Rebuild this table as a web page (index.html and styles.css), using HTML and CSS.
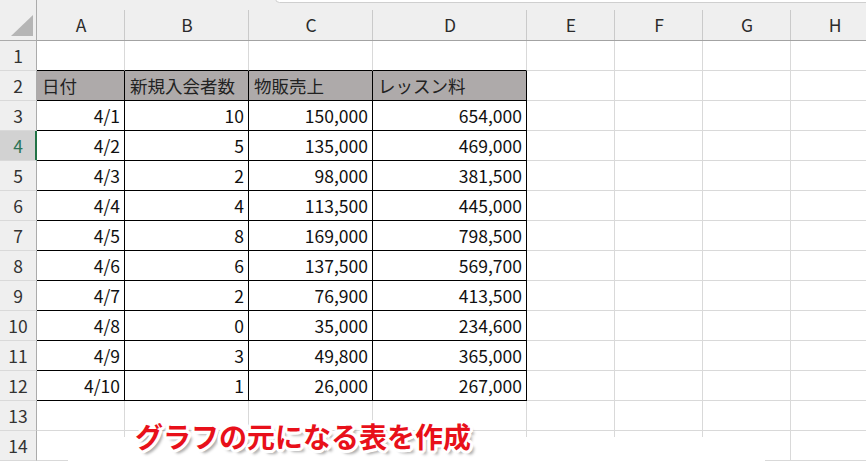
FILE: index.html
```html
<!DOCTYPE html>
<html lang="ja">
<head>
<meta charset="utf-8">
<link rel="stylesheet" href="styles.css">
</head>
<body>
<div class="screen">
  <div class="fbar"></div>
  <div class="sheet">
    <div class="corner"><svg width="37" height="40" viewBox="0 0 37 40"><polygon points="11,36 33,36 33,15" fill="#b5b5b5"/></svg></div>
    <div class="ch">A</div><div class="ch">B</div><div class="ch">C</div><div class="ch">D</div><div class="ch">E</div><div class="ch">F</div><div class="ch">G</div><div class="ch">H</div>

    <div class="rh">1</div><div class="c tt"></div><div class="c tt"></div><div class="c tt"></div><div class="c tt"></div><div class="c"></div><div class="c"></div><div class="c"></div><div class="c"></div>

    <div class="rh">2</div><div class="c t hd">日付</div><div class="c t hd">新規入会者数</div><div class="c t hd">物販売上</div><div class="c t hd">レッスン料</div><div class="c"></div><div class="c"></div><div class="c"></div><div class="c"></div>

    <div class="rh">3</div><div class="c t n">4/1</div><div class="c t n">10</div><div class="c t n">150,000</div><div class="c t n">654,000</div><div class="c"></div><div class="c"></div><div class="c"></div><div class="c"></div>

    <div class="rh sel">4</div><div class="c t n">4/2</div><div class="c t n">5</div><div class="c t n">135,000</div><div class="c t n">469,000</div><div class="c"></div><div class="c"></div><div class="c"></div><div class="c"></div>

    <div class="rh">5</div><div class="c t n">4/3</div><div class="c t n">2</div><div class="c t n">98,000</div><div class="c t n">381,500</div><div class="c"></div><div class="c"></div><div class="c"></div><div class="c"></div>

    <div class="rh">6</div><div class="c t n">4/4</div><div class="c t n">4</div><div class="c t n">113,500</div><div class="c t n">445,000</div><div class="c"></div><div class="c"></div><div class="c"></div><div class="c"></div>

    <div class="rh">7</div><div class="c t n">4/5</div><div class="c t n">8</div><div class="c t n">169,000</div><div class="c t n">798,500</div><div class="c"></div><div class="c"></div><div class="c"></div><div class="c"></div>

    <div class="rh">8</div><div class="c t n">4/6</div><div class="c t n">6</div><div class="c t n">137,500</div><div class="c t n">569,700</div><div class="c"></div><div class="c"></div><div class="c"></div><div class="c"></div>

    <div class="rh">9</div><div class="c t n">4/7</div><div class="c t n">2</div><div class="c t n">76,900</div><div class="c t n">413,500</div><div class="c"></div><div class="c"></div><div class="c"></div><div class="c"></div>

    <div class="rh">10</div><div class="c t n">4/8</div><div class="c t n">0</div><div class="c t n">35,000</div><div class="c t n">234,600</div><div class="c"></div><div class="c"></div><div class="c"></div><div class="c"></div>

    <div class="rh">11</div><div class="c t n">4/9</div><div class="c t n">3</div><div class="c t n">49,800</div><div class="c t n">365,000</div><div class="c"></div><div class="c"></div><div class="c"></div><div class="c"></div>

    <div class="rh">12</div><div class="c t n">4/10</div><div class="c t n">1</div><div class="c t n">26,000</div><div class="c t n">267,000</div><div class="c"></div><div class="c"></div><div class="c"></div><div class="c"></div>

    <div class="rh">13</div><div class="c"></div><div class="c"></div><div class="c"></div><div class="c"></div><div class="c"></div><div class="c"></div><div class="c"></div><div class="c"></div>

    <div class="rh">14</div><div class="c"></div><div class="c"></div><div class="c"></div><div class="c"></div><div class="c"></div><div class="c"></div><div class="c"></div><div class="c"></div>
  </div>
  <div class="note"><span class="note-text">グラフの元になる表を作成</span></div>
</div>
</body>
</html>
```

FILE: styles.css
```css
* { box-sizing: border-box; }
html, body { margin: 0; padding: 0; }
body {
  width: 866px;
  height: 462px;
  overflow: hidden;
  background: #fff;
  font-family: "Noto Sans CJK JP", "Noto Sans", sans-serif;
  font-size: 17.5px;
  color: #111;
}
.screen {
  position: relative;
  width: 866px;
  height: 462px;
  overflow: hidden;
}
.fbar {
  position: absolute;
  top: -6px;
  left: 275px;
  width: 620px;
  height: 9px;
  background: #fff;
  border: 1px solid #cfcfcf;
  border-radius: 5px;
  z-index: 2;
}
.sheet {
  display: grid;
  grid-template-columns: 37px 88px 124px 124px 154px 88px 88px 88px 88px;
  grid-template-rows: 41px repeat(14, 30px);
  width: 879px;
}
.corner {
  background: #efefef;
  border-right: 1px solid #ababab;
  border-bottom: 1px solid #ababab;
}
.corner svg { display: block; }
.ch {
  background: linear-gradient(#cacaca, #cacaca) right 10px / 1px 30px no-repeat, #efefef;
  border-bottom: 1px solid #a3a3a3;
  display: flex;
  align-items: center;
  justify-content: center;
  padding-top: 8px;
  color: #2b2b2b;
  font-size: 17.5px;
}
.rh {
  background: #efefef;
  border-right: 1px solid #ababab;
  border-bottom: 1px solid #d9d9d9;
  display: flex;
  align-items: center;
  justify-content: center;
  color: #333;
  line-height: 1;
}
.rh.sel {
  background: #d2d2d2;
  color: #2e7456;
  border-right-color: #217346;
  box-shadow: inset -1px 0 0 #217346;
}
.c {
  border-right: 1px solid #d9d9d9;
  border-bottom: 1px solid #d9d9d9;
  display: flex;
  align-items: center;
  padding: 0 4px 0 5px;
  white-space: nowrap;
  line-height: 1;
}
.c.tt { border-bottom-color: #000; }
.c.t {
  border-right-color: #000;
  border-bottom-color: #000;
}
.c.hd {
  background: #aeaaaa;
  color: #222;
}
.c.n {
  justify-content: flex-end;
  color: #111;
}
.note {
  position: absolute;
  left: 68px;
  top: 419px;
  width: 697px;
  height: 45px;
  background: linear-gradient(to bottom, transparent 18px, #fff 18px);
  padding-left: 67px;
}
.note-text {
  display: block;
  font-size: 28px;
  font-weight: 700;
  line-height: 34px;
  color: #e8101a;
  white-space: nowrap;
  text-shadow:
    2px 0 0 #fff, -2px 0 0 #fff, 0 2px 0 #fff, 0 -2px 0 #fff,
    2px 2px 0 #fff, -2px -2px 0 #fff, 2px -2px 0 #fff, -2px 2px 0 #fff,
    3px 1px 0 #fff, -3px 1px 0 #fff, 1px 3px 0 #fff, 1px -3px 0 #fff,
    3px -1px 0 #fff, -3px -1px 0 #fff, -1px 3px 0 #fff, -1px -3px 0 #fff,
    4px 4px 3px rgba(0,0,0,0.35);
}
```
